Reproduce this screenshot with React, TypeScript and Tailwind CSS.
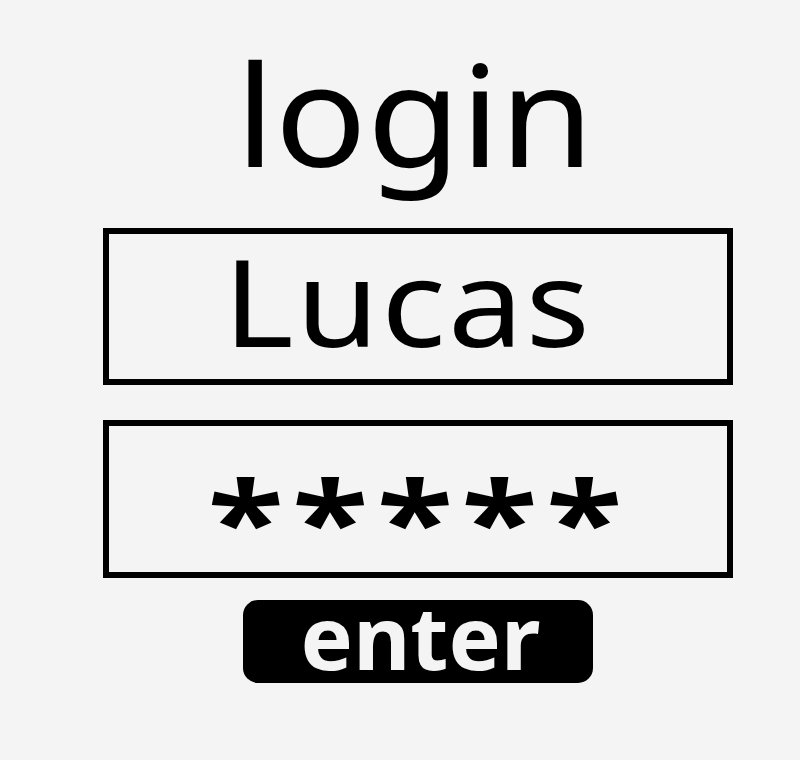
export default function App() {
  const font = { fontFamily: '"Noto Sans", "Open Sans", sans-serif' };
  return (
    <div className="h-[760px] w-[800px] bg-[#f4f4f4] text-black" style={font}>
      <div className="flex flex-col pl-[103px] pt-[42px]">
        {/* title */}
        <div className="flex w-[630px] justify-center">
          <h1 className="m-0 h-[141px] scale-x-[1.08] pr-[6px] text-[141px] leading-[141px] font-normal">login</h1>
        </div>

        {/* username */}
        <div className="mt-[45px] flex h-[157px] w-[630px] items-center justify-center border-[6px] border-black">
          <span className="mb-[12px] mr-[20px] scale-x-[1.12] text-[120px] leading-[120px] tracking-[2px]">Lucas</span>
        </div>

        {/* password */}
        <div className="mt-[35px] flex h-[158px] w-[630px] items-center justify-center border-[6px] border-black">
          <span className="mt-[39px] ml-[3px] scale-x-[1.25] text-[112px] leading-[70px] font-bold tracking-[7px]">*****</span>
        </div>

        {/* enter */}
        <button className="mt-[22px] ml-[140px] flex h-[83px] w-[350px] items-center justify-center rounded-[15px] bg-black pb-[11px] pl-[5px] text-[88px] leading-[88px] font-bold text-[#f4f4f4]">
          enter
        </button>
      </div>
    </div>
  );
}
